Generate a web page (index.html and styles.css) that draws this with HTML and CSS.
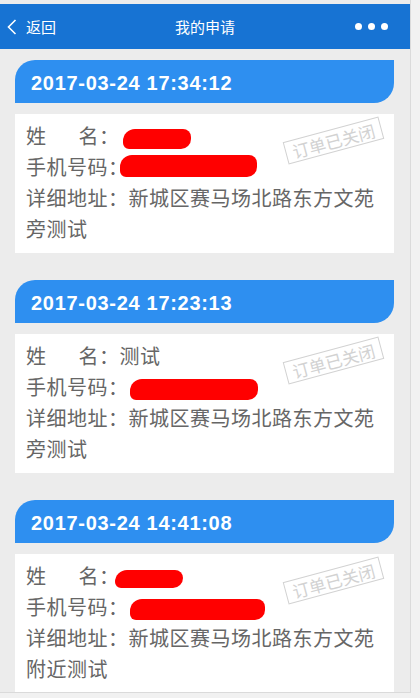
FILE: index.html
```html
<!DOCTYPE html>
<html lang="zh-CN">
<head>
    <meta charset="UTF-8">
    <meta name="viewport" content="width=device-width, initial-scale=1.0">
    <title>我的申请</title>
    <link rel="stylesheet" href="styles.css">
</head>
<body>
    <div class="screen">
        <div class="nav">
            <a class="nav-back" href="#">
                <svg width="10" height="16" viewBox="0 0 10 16"><path d="M8.5 1 L1.5 8 L8.5 15" fill="none" stroke="#fff" stroke-width="1.6"/></svg>
                <span>返回</span>
            </a>
            <div class="nav-title">我的申请</div>
            <div class="nav-more"><i></i><i></i><i></i></div>
        </div>

        <div class="list">
            <div class="card">
                <div class="card-head">2017-03-24 17:34:12</div>
                <div class="card-body">
                    <p>姓<span class="gap"></span>名：<span class="mask name-a"></span></p>
                    <p>手机号码：<span class="mask phone-a"></span></p>
                    <p>详细地址：新城区赛马场北路东方文苑旁测试</p>
                    <div class="stamp">订单已关闭</div>
                </div>
            </div>

            <div class="card">
                <div class="card-head">2017-03-24 17:23:13</div>
                <div class="card-body">
                    <p>姓<span class="gap"></span>名：测试</p>
                    <p>手机号码：<span class="mask phone-b"></span></p>
                    <p>详细地址：新城区赛马场北路东方文苑旁测试</p>
                    <div class="stamp">订单已关闭</div>
                </div>
            </div>

            <div class="card">
                <div class="card-head">2017-03-24 14:41:08</div>
                <div class="card-body">
                    <p>姓<span class="gap"></span>名：<span class="mask name-c"></span></p>
                    <p>手机号码：<span class="mask phone-c"></span></p>
                    <p>详细地址：新城区赛马场北路东方文苑附近测试</p>
                    <div class="stamp">订单已关闭</div>
                </div>
            </div>
        </div>
    </div>
</body>
</html>
```

FILE: styles.css
```css
body {
    margin: 0;
    background: #f1f1f1;
    font-family: "Noto Sans CJK SC", sans-serif;
}
.screen {
    width: 411px;
    height: 693px;
    box-sizing: border-box;
    padding-top: 4px;
    overflow: hidden;
    background: #ececec;
    border-right: 1px solid #dadada;
    border-bottom: 1px solid #dadada;
}

/* top bar */
.nav {
    height: 45px;
    background: #1773d3;
    color: #fff;
    display: grid;
    grid-template-columns: 1fr auto 1fr;
    align-items: center;
    font-size: 15px;
}
.nav-back {
    display: flex;
    align-items: center;
    gap: 9px;
    padding-left: 7px;
    color: #fff;
    text-decoration: none;
}
.nav-more {
    display: flex;
    justify-content: flex-end;
    gap: 6px;
    padding-right: 22px;
}
.nav-more i {
    width: 7px;
    height: 7px;
    border-radius: 50%;
    background: #fff;
}

/* order list */
.list {
    padding: 11px 16px 0 15px;
}
.card + .card {
    margin-top: 27px;
}
.card-head {
    height: 43px;
    box-sizing: border-box;
    padding: 3px 0 0 16px;
    line-height: 40px;
    background: #2e8ff0;
    color: #fff;
    border-radius: 20px 0 20px 0;
    font-family: "Liberation Sans", Arial, sans-serif;
    font-weight: bold;
    font-size: 20px;
    letter-spacing: 0.7px;
}
.card-body {
    position: relative;
    margin-top: 11px;
    padding: 6px 11px 9px;
    background: #fff;
    color: #666;
    font-size: 20px;
    letter-spacing: 0.5px;
}
.card-body p {
    margin: 0;
    line-height: 31px;
}
.gap {
    display: inline-block;
    width: 32px;
}

/* closed stamp */
.stamp {
    position: absolute;
    top: 15px;
    right: 11px;
    padding: 0 6px;
    line-height: 21px;
    font-size: 17px;
    letter-spacing: 0;
    color: #d2d2d2;
    border: 1px solid #d2d2d2;
    transform: rotate(-15deg);
}

/* red marker over private info */
.mask {
    display: inline-block;
    vertical-align: middle;
    height: 20px;
    background: #f00;
    border-radius: 12px 8px 10px 6px;
}
.name-a { width: 68px; margin-left: 3px; }
.phone-a { width: 137px; height: 22px; margin-left: -9px; position: relative; top: -4px; }
.phone-b { width: 128px; height: 21px; margin-left: 1px; }
.name-c { width: 68px; height: 18px; margin-left: -5px; }
.phone-c { width: 135px; height: 21px; margin-left: 1px; }
```
